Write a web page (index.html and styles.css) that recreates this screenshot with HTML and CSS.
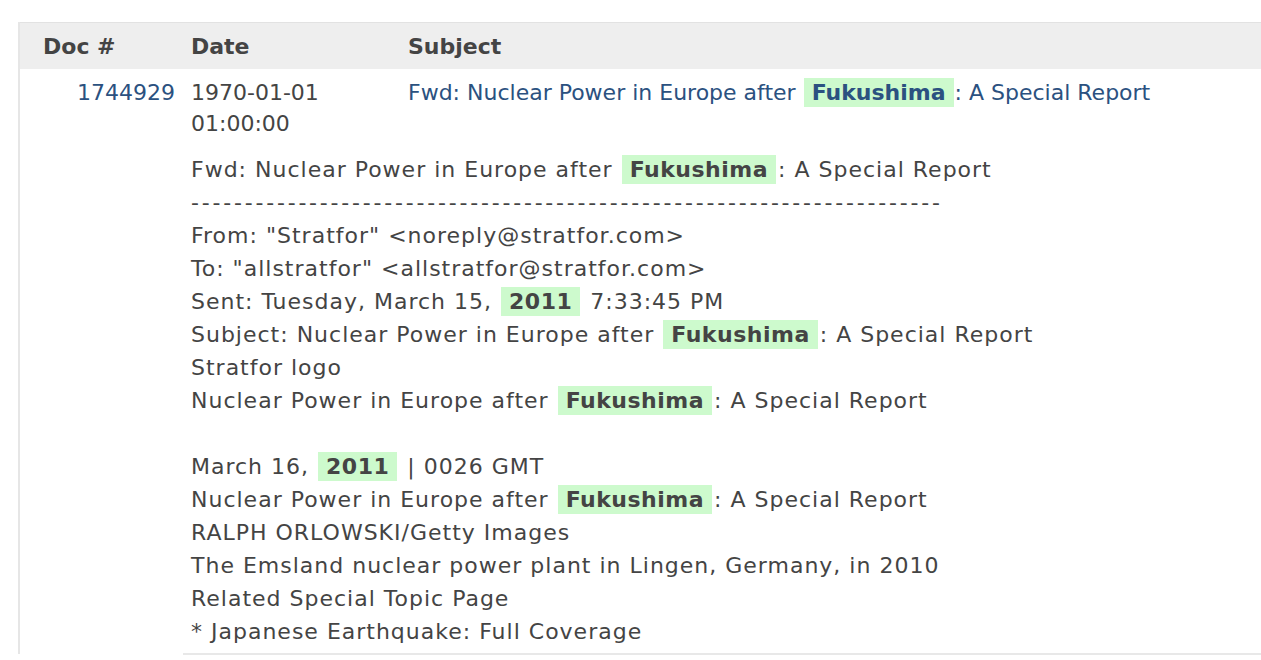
FILE: index.html
```html
<!DOCTYPE html>
<html>
<head>
<meta charset="utf-8">
<link rel="stylesheet" href="styles.css">
</head>
<body>
<div class="wrap">
<table class="docs">
  <colgroup>
    <col class="c-doc"><col class="c-date"><col class="c-subj">
  </colgroup>
  <thead>
    <tr><th class="h-doc">Doc #</th><th>Date</th><th>Subject</th></tr>
  </thead>
  <tbody>
    <tr class="row">
      <td class="doc"><a href="#">1744929</a></td>
      <td class="date">1970-01-01<br>01:00:00</td>
      <td class="subj"><a href="#">Fwd: Nuclear Power in Europe after <span class="hl">Fukushima</span>: A Special Report</a></td>
    </tr>
    <tr class="body-row">
      <td></td>
      <td colspan="2" class="body">Fwd: Nuclear Power in Europe after <span class="hl">Fukushima</span>: A Special Report<br>
<span class="dashes">----------------------------------------------------------------------</span><br>
From: "Stratfor" &lt;noreply@stratfor.com&gt;<br>
To: "allstratfor" &lt;allstratfor@stratfor.com&gt;<br>
Sent: Tuesday, March 15, <span class="hl">2011</span> 7:33:45 PM<br>
Subject: Nuclear Power in Europe after <span class="hl">Fukushima</span>: A Special Report<br>
Stratfor logo<br>
Nuclear Power in Europe after <span class="hl">Fukushima</span>: A Special Report<br>
<br>
March 16, <span class="hl">2011</span> | 0026 GMT<br>
Nuclear Power in Europe after <span class="hl">Fukushima</span>: A Special Report<br>
RALPH ORLOWSKI/Getty Images<br>
The Emsland nuclear power plant in Lingen, Germany, in 2010<br>
Related Special Topic Page<br>
* Japanese Earthquake: Full Coverage</td>
    </tr>
  </tbody>
</table>
</div>
</body>
</html>
```

FILE: styles.css
```css
html, body {
  margin: 0;
  padding: 0;
  background: #fff;
}
body {
  font-family: "DejaVu Sans", Verdana, sans-serif;
  font-size: 22px;
  color: #444;
  overflow: hidden;
}
.wrap {
  padding: 22px 0 0 18px;
  width: 1400px;
}
.docs {
  border-collapse: collapse;
  width: 1400px;
  border-left: 2px solid #e6e6e6;
}
.c-doc { width: 164px; }
.c-date { width: 217px; }
th {
  background: #eeeeee;
  border-top: 1px solid #e2e2e2;
  text-align: left;
  font-weight: bold;
  color: #444;
  height: 46px;
  padding: 0 8px;
  line-height: 33px;
  vertical-align: middle;
}
th.h-doc { padding-left: 23px; }
td {
  vertical-align: top;
  line-height: 31px;
  padding: 0 8px;
}
.row td { padding-top: 8px; }
td.doc { text-align: right; }
a {
  color: #2b5180;
  text-decoration: none;
}
.hl {
  background: #cdfacd;
  font-weight: bold;
  padding: 2px 8px;
  margin: 0 1px;
}
td.body {
  padding-top: 14px;
  padding-bottom: 5px;
  line-height: 33px;
  letter-spacing: 1px;
  border-bottom: 2px solid #e8e8e8;
  white-space: nowrap;
}
td.body .hl {
  letter-spacing: 0.5px;
  margin: 0 2px 0 1px;
}
.dashes {
  letter-spacing: 2.8px;
}
```
